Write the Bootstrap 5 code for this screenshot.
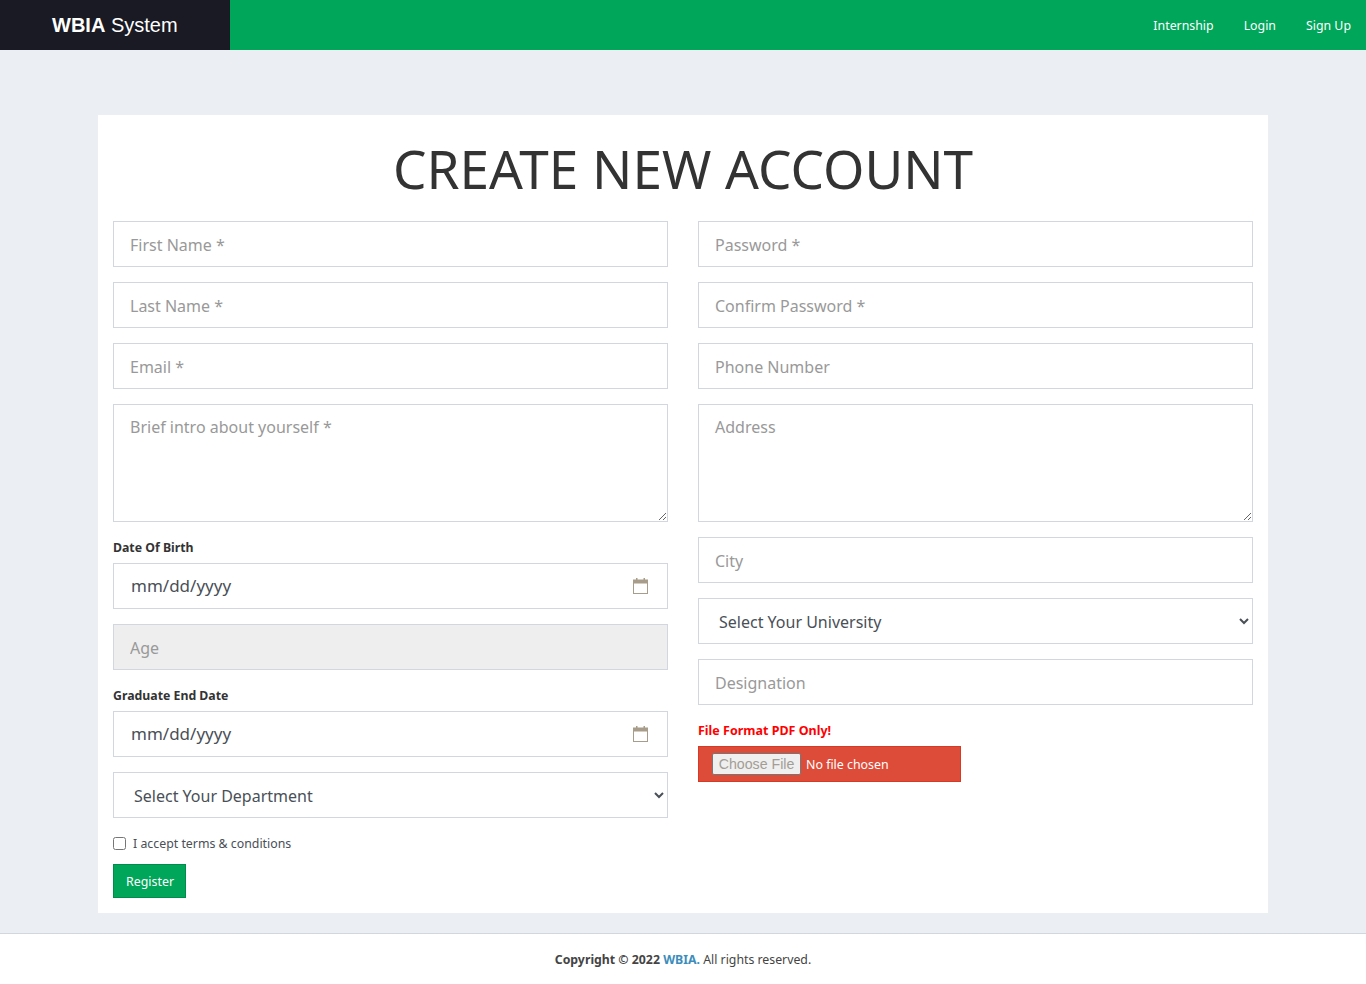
<!DOCTYPE html>
<html lang="en">
<head>
    <meta charset="UTF-8">
    <meta name="viewport" content="width=device-width, initial-scale=1">
    <title>WBIA System - Register</title>
    <link href="https://cdn.jsdelivr.net/npm/bootstrap@5.3.2/dist/css/bootstrap.min.css" rel="stylesheet">
    <style>
        body { background: #ebeef3; font-family: "Noto Sans", sans-serif; color: #333; }
        .top-bar { height: 50px; background: #00a65a; }
        .brand-box { width: 230px; background: #191a23; color: #fff; font-family: "Liberation Sans", sans-serif; font-size: 20px; padding-left: 52px; line-height: 50px; text-decoration: none; }
        .top-link { color: #fff; font-size: 12.35px; text-decoration: none; margin-right: 15px; margin-left: 15px; padding-top: 2px; }
        .page-wrap { padding: 65px 98px 20px; }
        .form-sheet { background: #fff; padding: 15px; }
        .form-title { font-size: 53.1px; line-height: 74px; font-weight: 400; color: #333; text-align: center; margin: 2px 0 15px; }
        .col-gap { --bs-gutter-x: 30px; }
        .form-control.wb-field, .form-select.wb-field { height: 46px; border-radius: 0; border: 1px solid #d2d6e0; padding: 7px 16px 5px; font-size: 16px; color: #495057; margin-bottom: 15px; }
        .form-control.wb-field::placeholder { color: #999; }
        .form-control.wb-area { height: 118px; padding-top: 10px; }
        .form-control.wb-date { padding: 6px 16px 6px 17px; font-size: 17px; }
        .form-control.wb-date::-webkit-calendar-picker-indicator {
            width: 15px; height: 16px; padding: 0; margin: 0 3px 0 0; background-size: 15px 16px;
            background-image: url("data:image/svg+xml,%3Csvg xmlns='http://www.w3.org/2000/svg' viewBox='0 0 15 16'%3E%3Cpath fill='%23a89c8a' d='M3 0h1.500v2H3zM10.500 0H12v2h-1.500z'/%3E%3Cpath fill='%23a89c8a' d='M0 1.500h15V16H0zM1 5.500V15h13V5.500z' fill-rule='evenodd'/%3E%3C/svg%3E");
        }
        .form-control.wb-field:disabled { background: #eee; }
        .form-select.wb-field { appearance: auto; background-image: none; padding-left: 16px; padding-right: 9px; }
        .field-label { font-size: 12.3px; font-weight: 700; line-height: 20px; padding-top: 1px; margin: 0 0 5px; display: block; }
        .field-label.file-label { color: #f00; font-size: 12.5px; }
        .file-box { width: 263px; height: 36px; background: #dd4b39; border: 1px solid #d73925; padding: 6px 13px; color: #fff; font-size: 12.4px; display: block; border-radius: 0; }
        .file-box::file-selector-button { font: 14.2px "Liberation Sans", sans-serif; height: 22px; width: 89px; padding: 0; margin: 0 5px 0 0; color: #a39d95; background: #efefef; border: 1px solid #767676; border-radius: 2px; }
        .accept-row { font-size: 12.35px; line-height: 20px; margin-bottom: 10px; color: #495057; }
        .accept-row input { width: 13px; height: 13px; margin: 0 7px 0 0; }
        .accept-row label { padding-top: 1px; }
        .btn.reg-btn { background: #00a65a; border: 1px solid #008d4c; color: #fff; font-size: 12.4px; border-radius: 0; height: 34px; padding: 2px 11px 0 12px; }
        .site-footer { background: #fff; border-top: 1px solid #d2d6de; height: 51px; padding-top: 2px; line-height: 48px; font-size: 12.3px; color: #444; text-align: center; }
        .site-footer a { color: #3c8dbc; text-decoration: none; font-weight: 700; }
    </style>
</head>
<body>

<nav class="top-bar d-flex justify-content-between">
    <a class="brand-box" href="#"><b>WBIA</b> System</a>
    <div class="d-flex align-items-center">
        <a class="top-link" href="#">Internship</a>
        <a class="top-link" href="#">Login</a>
        <a class="top-link" href="#">Sign Up</a>
    </div>
</nav>

<div class="page-wrap">
    <div class="form-sheet">
        <h1 class="form-title">CREATE NEW ACCOUNT</h1>
        <form>
            <div class="row col-gap">
                <div class="col-6">
                    <input type="text" class="form-control wb-field" placeholder="First Name *">
                    <input type="text" class="form-control wb-field" placeholder="Last Name *">
                    <input type="email" class="form-control wb-field" placeholder="Email *">
                    <textarea class="form-control wb-field wb-area" placeholder="Brief intro about yourself *"></textarea>
                    <label class="field-label">Date Of Birth</label>
                    <input type="date" class="form-control wb-field wb-date">
                    <input type="text" class="form-control wb-field" placeholder="Age" disabled>
                    <label class="field-label">Graduate End Date</label>
                    <input type="date" class="form-control wb-field wb-date">
                    <select class="form-select wb-field">
                        <option>Select Your Department</option>
                    </select>
                    <div class="accept-row d-flex align-items-center">
                        <input type="checkbox" id="terms">
                        <label for="terms">I accept terms &amp; conditions</label>
                    </div>
                    <button type="button" class="btn reg-btn">Register</button>
                </div>
                <div class="col-6">
                    <input type="password" class="form-control wb-field" placeholder="Password *">
                    <input type="password" class="form-control wb-field" placeholder="Confirm Password *">
                    <input type="text" class="form-control wb-field" placeholder="Phone Number">
                    <textarea class="form-control wb-field wb-area" placeholder="Address"></textarea>
                    <input type="text" class="form-control wb-field" placeholder="City">
                    <select class="form-select wb-field">
                        <option>Select Your University</option>
                    </select>
                    <input type="text" class="form-control wb-field" placeholder="Designation">
                    <label class="field-label file-label">File Format PDF Only!</label>
                    <input type="file" class="file-box">
                </div>
            </div>
        </form>
    </div>
</div>

<footer class="site-footer">
    <b>Copyright &copy; 2022 <a href="#">WBIA.</a></b> All rights reserved.
</footer>

<script src="https://cdn.jsdelivr.net/npm/bootstrap@5.3.2/dist/js/bootstrap.bundle.min.js"></script>
</body>
</html>
